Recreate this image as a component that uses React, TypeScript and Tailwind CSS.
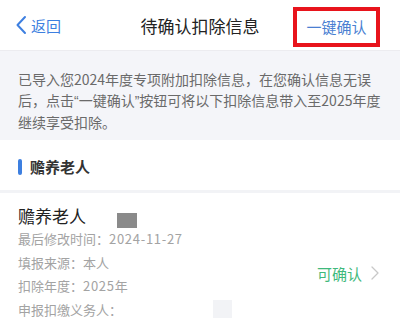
import React from "react";

const font = { fontFamily: '"Noto Sans CJK SC", "Noto Sans", sans-serif' };
const latin = { fontFamily: '"Liberation Sans", sans-serif' };

export default function App() {
  return (
    <div className="w-[400px] h-[331px] bg-white overflow-hidden" style={font}>
      {/* Header */}
      <div className="relative h-[51px] flex items-center border-b border-[#ececf0] bg-white">
        <div className="flex items-center pl-[15px] text-[#3d7fe0]">
          <svg width="12" height="20" viewBox="0 0 12 20" className="mr-[4px]">
            <path d="M10 2 L2.5 10 L10 18" fill="none" stroke="#3d7fe0" strokeWidth="2" strokeLinecap="round" strokeLinejoin="round" />
          </svg>
          <span className="text-[15px] leading-none">返回</span>
        </div>
        <div className="absolute left-0 right-0 top-0 h-[51px] flex items-center justify-center pointer-events-none">
          <span className="text-[17px] text-[#222] leading-none">待确认扣除信息</span>
        </div>
        <div className="ml-auto mr-[20px] mt-[3px] h-[40px] w-[87px] border-[4px] border-[#e8141c] flex items-center justify-center">
          <span className="text-[15px] text-[#4a7fd2] leading-none">一键确认</span>
        </div>
      </div>

      {/* Info band */}
      <div className="bg-[#f4f5f9] pt-[18px] pb-[7px] px-[18px] text-[14px] leading-[21px] text-[#6a6a6a] whitespace-nowrap">
        <div>已导入您2024年度专项附加扣除信息，在您确认信息无误</div>
        <div>
          后，点击<span style={latin}>“</span>一键确认<span style={latin}>”</span>按钮可将以下扣除信息带入至2025年度
        </div>
        <div>继续享受扣除。</div>
      </div>

      {/* Section header */}
      <div className="h-[50px] flex items-center px-[18px] pt-[3px] bg-white">
        <div className="w-[4px] h-[16px] rounded-full bg-[#3d7fe0] mr-[8px]" />
        <span className="text-[15px] font-bold text-[#333] leading-none">赡养老人</span>
      </div>
      <div className="h-[3px] bg-[#f2f3f6]" />

      {/* Card */}
      <div className="bg-white px-[18px] pt-[10px] flex">
        <div className="flex-1">
          <div className="flex items-center h-[24px]">
            <span className="text-[17px] text-[#222] leading-none">赡养老人</span>
            <div className="ml-[31px] mt-[10px] w-[20px] h-[15px] bg-[#8a8a8a]" />
          </div>
          <div className="text-[13px] leading-[23.5px] text-[#a3a3a3]">
            <div>
              最后修改时间：<span className="tracking-[0.7px]">2024-11-27</span>
            </div>
            <div>填报来源：本人</div>
            <div>
              扣除年度：<span className="tracking-[0.7px]">2025</span>年
            </div>
            <div className="flex items-center">
              申报扣缴义务人：
              <div className="ml-[91px] w-[19px] h-[18px] bg-[#f2f3f6]" />
            </div>
          </div>
        </div>
        <div className="flex items-center pt-[22px] pr-[2px]">
          <span className="text-[15px] text-[#3fb97c] leading-none">可确认</span>
          <svg width="10" height="16" viewBox="0 0 10 16" className="ml-[8px]">
            <path d="M2 2 L8 8 L2 14" fill="none" stroke="#c8c8c8" strokeWidth="1.3" strokeLinecap="round" strokeLinejoin="round" />
          </svg>
        </div>
      </div>
    </div>
  );
}
